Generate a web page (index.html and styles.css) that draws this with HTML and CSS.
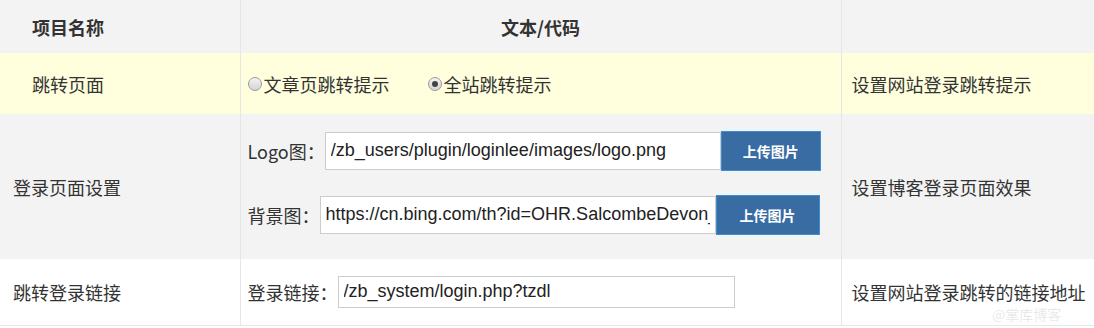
FILE: index.html
```html
<!DOCTYPE html>
<html lang="zh-CN">
<head>
    <meta charset="UTF-8">
    <title>登录设置</title>
    <link rel="stylesheet" href="styles.css">
</head>
<body>
    <table class="set-table">
        <colgroup>
            <col class="c1">
            <col class="c2">
            <col class="c3">
        </colgroup>
        <thead>
            <tr>
                <th class="col-name">项目名称</th>
                <th class="col-text">文本/代码</th>
                <th class="col-desc"></th>
            </tr>
        </thead>
        <tbody>
            <tr class="row-hl">
                <td class="name-pad">跳转页面</td>
                <td>
                    <label class="radio"><input type="radio" name="tz">文章页跳转提示</label>
                    <label class="radio"><input type="radio" name="tz" checked>全站跳转提示</label>
                </td>
                <td>设置网站登录跳转提示</td>
            </tr>
            <tr class="row-gray">
                <td>登录页面设置</td>
                <td class="fields">
                    <div class="field">
                        <span class="lbl">Logo图：</span>
                        <input class="txt" type="text" value="/zb_users/plugin/loginlee/images/logo.png">
                        <button class="up-btn">上传图片</button>
                    </div>
                    <div class="field second">
                        <span class="lbl">背景图：</span>
                        <input class="txt" type="text" value="https://cn.bing.com/th?id=OHR.SalcombeDevon_ZH-CN1234567890_1920x1080.jpg">
                        <button class="up-btn">上传图片</button>
                    </div>
                </td>
                <td>设置博客登录页面效果</td>
            </tr>
            <tr class="row-white">
                <td>跳转登录链接</td>
                <td>
                    <div class="field">
                        <span class="lbl">登录链接：</span>
                        <input class="txt link" type="text" value="/zb_system/login.php?tzdl">
                    </div>
                </td>
                <td>设置网站登录跳转的链接地址<span class="mark">@掌库博客</span></td>
            </tr>
        </tbody>
    </table>
</body>
</html>
```

FILE: styles.css
```css
body {
    margin: 0;
    font-family: "Noto Sans CJK SC", "Liberation Sans", sans-serif;
    font-size: 18px;
    color: #333;
    background: #fff;
}
.set-table {
    width: 1094px;
    border-collapse: collapse;
    table-layout: fixed;
}
.c1 { width: 240px; }
.c2 { width: 601px; }
.set-table th, .set-table td {
    border-left: 1px solid #e6e6e6;
    border-right: 1px solid #e6e6e6;
    padding: 0 0 0 13px;
    text-align: left;
    vertical-align: middle;
    overflow: hidden;
}
.set-table th:first-child, .set-table td:first-child {
    border-left: none;
}
.set-table th:last-child, .set-table td:last-child {
    border-right: none;
    padding-left: 10px;
}
.set-table thead tr {
    background: #f3f3f3;
    height: 53px;
}
.set-table th {
    font-weight: bold;
    font-size: 18px;
}
.set-table th.col-name { padding-left: 32px; }
.set-table th.col-text { text-align: center; padding-left: 0; }
.set-table td:nth-child(2) { padding-left: 7px; }
.set-table td.fields { padding-bottom: 8px; }
.row-hl {
    background: #ffffdd;
    height: 61px;
}
.row-hl td.name-pad { padding-left: 32px; }
.row-gray {
    background: #f3f3f3;
    height: 145px;
}
.row-white {
    background: #fff;
    height: 66px;
    border-bottom: 1px solid #e6e6e6;
}
.radio {
    display: inline-flex;
    align-items: center;
    margin-right: 34px;
}
.radio input {
    appearance: none;
    -webkit-appearance: none;
    box-sizing: border-box;
    margin: 0 2px 0 0;
    width: 14px;
    height: 14px;
    border-radius: 50%;
    border: 1px solid #9a9a9a;
    background: linear-gradient(#f4f4f4, #d4d4d4);
    position: relative;
}
.radio input:checked::after {
    content: "";
    position: absolute;
    left: 3px;
    top: 3px;
    width: 6px;
    height: 6px;
    border-radius: 50%;
    background: #444;
}
.field {
    display: flex;
    align-items: center;
}
.field.second { margin-top: 24px; }
.lbl {
    white-space: nowrap;
}
.txt {
    box-sizing: border-box;
    height: 38px;
    width: 396px;
    border: 1px solid #ccc;
    background: #fff;
    padding: 0 5px;
    font-family: "Liberation Sans", sans-serif;
    font-size: 18px;
    color: #222;
}
.txt.link {
    width: 397px;
    height: 32px;
}
.up-btn {
    box-sizing: border-box;
    height: 40px;
    width: 100px;
    background: #386ca2;
    border: 1px solid #3a8fd0;
    color: #fff;
    font-family: "Noto Sans CJK SC", sans-serif;
    font-weight: bold;
    font-size: 14px;
}
.second .up-btn { width: 104px; }
.mark {
    position: absolute;
    left: 992px;
    top: 304px;
    color: rgba(150, 150, 150, 0.22);
    font-size: 14px;
}
```
